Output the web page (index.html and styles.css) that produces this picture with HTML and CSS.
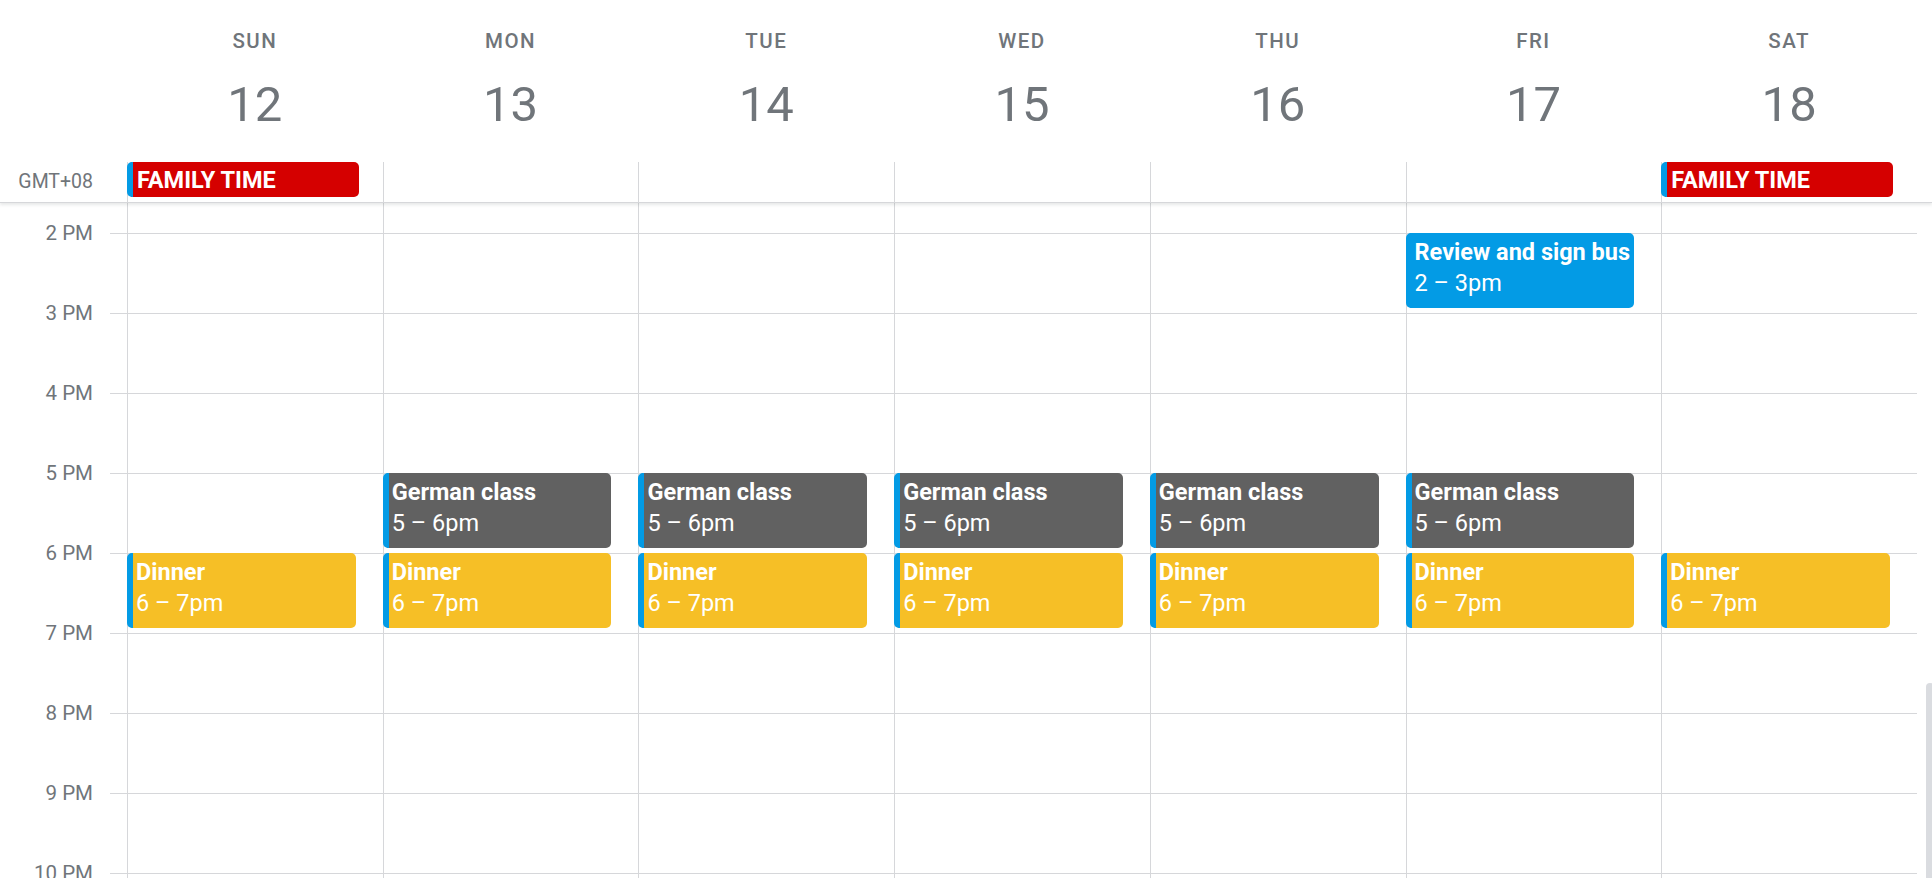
FILE: index.html
```html
<!DOCTYPE html>
<html>
<head>
<meta charset="utf-8">
<title>Week</title>
<link rel="stylesheet" href="styles.css">
</head>
<body>
<div class="cal">
  <header class="head">
    <div class="days">
      <div class="day"><div class="dow">SUN</div><div class="num">12</div></div>
      <div class="day"><div class="dow">MON</div><div class="num">13</div></div>
      <div class="day"><div class="dow">TUE</div><div class="num">14</div></div>
      <div class="day"><div class="dow">WED</div><div class="num">15</div></div>
      <div class="day"><div class="dow">THU</div><div class="num">16</div></div>
      <div class="day"><div class="dow">FRI</div><div class="num">17</div></div>
      <div class="day"><div class="dow">SAT</div><div class="num">18</div></div>
    </div>
    <div class="allday">
      <div class="tz">GMT+08</div>
      <div class="adcell"><div class="adev">FAMILY TIME</div></div>
      <div class="adcell"></div>
      <div class="adcell"></div>
      <div class="adcell"></div>
      <div class="adcell"></div>
      <div class="adcell"></div>
      <div class="adcell"><div class="adev">FAMILY TIME</div></div>
    </div>
  </header>
  <main class="body">
    <div class="gutter">
      <div class="hl">2 PM</div>
      <div class="hl">3 PM</div>
      <div class="hl">4 PM</div>
      <div class="hl">5 PM</div>
      <div class="hl">6 PM</div>
      <div class="hl">7 PM</div>
      <div class="hl">8 PM</div>
      <div class="hl">9 PM</div>
      <div class="hl">10 PM</div>
    </div>
    <div class="lines">
      <div class="ticks"></div>
      <div class="col">
        <div class="ev dinner"><div class="t">Dinner</div><div class="w">6 – 7pm</div></div>
      </div>
      <div class="col">
        <div class="ev german"><div class="t">German class</div><div class="w">5 – 6pm</div></div>
        <div class="ev dinner"><div class="t">Dinner</div><div class="w">6 – 7pm</div></div>
      </div>
      <div class="col">
        <div class="ev german"><div class="t">German class</div><div class="w">5 – 6pm</div></div>
        <div class="ev dinner"><div class="t">Dinner</div><div class="w">6 – 7pm</div></div>
      </div>
      <div class="col">
        <div class="ev german"><div class="t">German class</div><div class="w">5 – 6pm</div></div>
        <div class="ev dinner"><div class="t">Dinner</div><div class="w">6 – 7pm</div></div>
      </div>
      <div class="col">
        <div class="ev german"><div class="t">German class</div><div class="w">5 – 6pm</div></div>
        <div class="ev dinner"><div class="t">Dinner</div><div class="w">6 – 7pm</div></div>
      </div>
      <div class="col">
        <div class="ev review"><div class="t">Review and sign bus</div><div class="w">2 – 3pm</div></div>
        <div class="ev german"><div class="t">German class</div><div class="w">5 – 6pm</div></div>
        <div class="ev dinner"><div class="t">Dinner</div><div class="w">6 – 7pm</div></div>
      </div>
      <div class="col">
        <div class="ev dinner"><div class="t">Dinner</div><div class="w">6 – 7pm</div></div>
      </div>
    </div>
  </main>
  <div class="thumb"></div>
</div>
</body>
</html>
```

FILE: styles.css
```css
* { box-sizing: border-box; }
html, body { margin: 0; padding: 0; background: #fff; }
body { font-family: Roboto, "Liberation Sans", Arial, sans-serif; color: #3c4043; }

.cal { position: relative; width: 1932px; height: 878px; overflow: hidden; }

.head {
  position: relative;
  z-index: 2;
  background: #fff;
  border-bottom: 1px solid #d6d7da;
  box-shadow: 0 2px 3px rgba(60, 64, 67, 0.12);
}

.days {
  display: grid;
  grid-template-columns: repeat(7, 1fr);
  margin-left: 127px;
  margin-right: 15px;
  padding-top: 29px;
  height: 162px;
}
.day { text-align: center; }
.dow {
  font-size: 20.5px;
  line-height: 24px;
  font-weight: 500;
  letter-spacing: 1.5px;
  color: #70757a;
}
.num {
  margin-top: 25px;
  font-size: 49px;
  line-height: 54px;
  font-weight: 400;
  color: #70757a;
}

.allday {
  display: grid;
  grid-template-columns: 127px repeat(7, 1fr);
  margin-right: 15px;
  height: 40px;
}
.tz {
  font-size: 19.5px;
  line-height: 40px;
  color: #70757a;
  text-align: right;
  padding-right: 34px;
}
.adcell { border-left: 1px solid #d6d7da; }
.adev {
  margin-left: -1px;
  width: 232px;
  height: 35px;
  background: #d50000;
  border-left: 6px solid #039be5;
  border-radius: 5px;
  color: #fff;
  font-size: 23.5px;
  font-weight: 700;
  line-height: 37px;
  padding-left: 4px;
  white-space: nowrap;
  overflow: hidden;
}

.body { display: flex; height: 675px; }
.gutter { width: 110px; flex: none; padding-top: 19px; }
.hl {
  height: 80px;
  line-height: 22px;
  font-size: 20.5px;
  color: #70757a;
  text-align: right;
  padding-right: 17px;
}

.lines {
  flex: 1;
  margin-right: 15px;
  display: grid;
  grid-template-columns: 17px repeat(7, 1fr);
  background-image: linear-gradient(to bottom, #d6d7da 0, #d6d7da 1px, transparent 1px);
  background-size: 100% 80px;
  background-position: 0 30px;
}
.col {
  border-left: 1px solid #d6d7da;
  display: grid;
  grid-template-rows: 30px repeat(8, 80px);
  align-content: start;
}

.ev {
  align-self: start;
  margin-left: -1px;
  width: calc(100% - 26px);
  height: 75px;
  border-left: 6px solid #039be5;
  border-radius: 5px;
  color: #fff;
  font-size: 23.5px;
  line-height: 31px;
  padding: 4px 0 0 3px;
  overflow: hidden;
  white-space: nowrap;
  grid-column: 1;
}
.ev .t { font-weight: 700; }
.ev .w { font-weight: 400; }
.review { grid-row: 2; background: #039be5; }
.german { grid-row: 5; background: #616161; }
.dinner { grid-row: 6; background: #f6bf26; }

.thumb {
  position: absolute;
  right: -2px;
  top: 683px;
  width: 8px;
  height: 240px;
  border-radius: 4px;
  background: #dadce0;
}
```
